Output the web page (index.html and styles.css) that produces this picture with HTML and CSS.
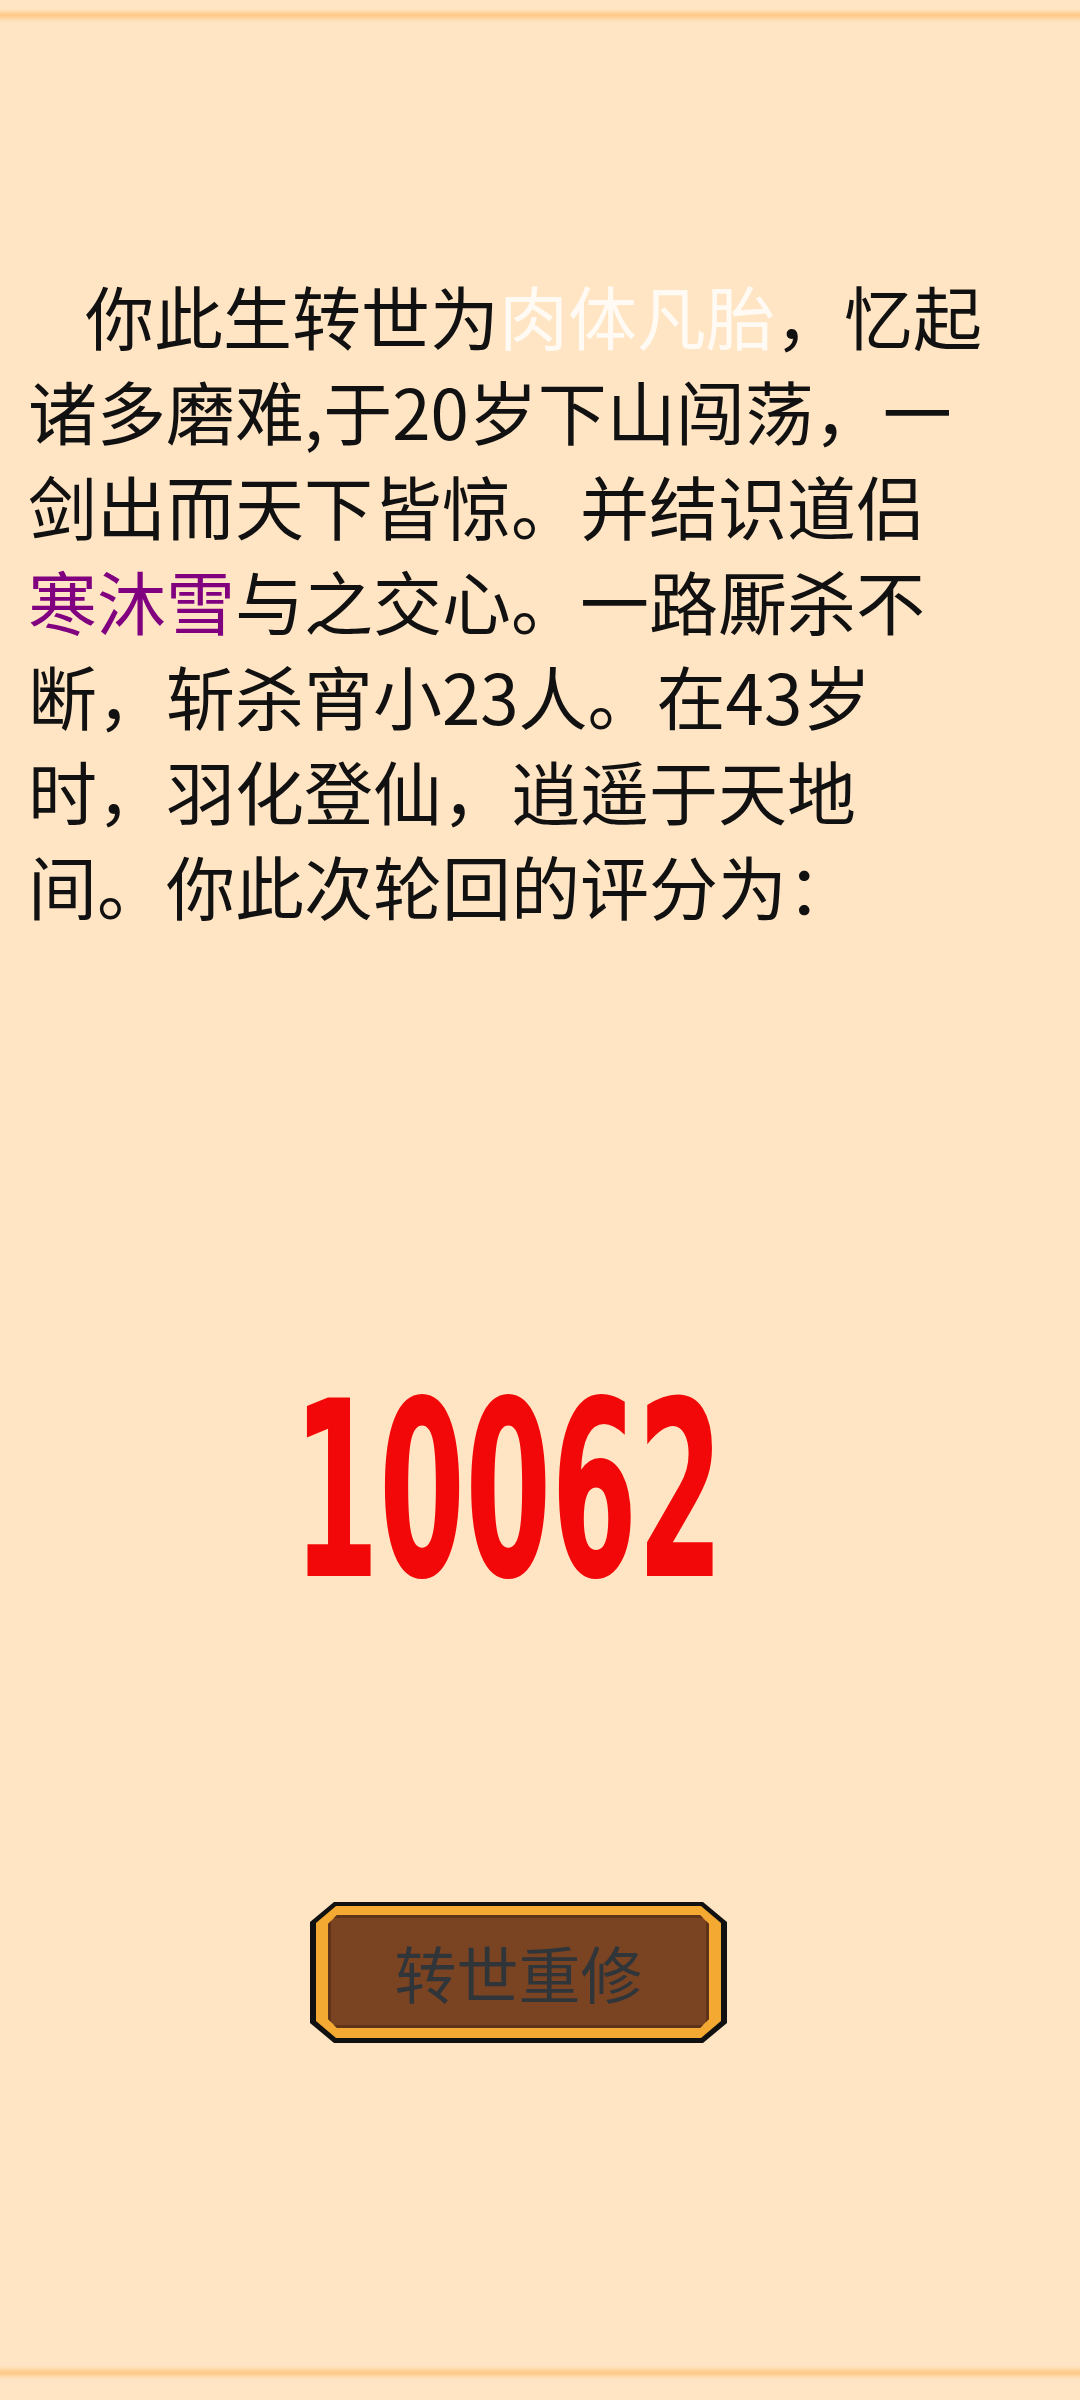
FILE: index.html
```html
<!DOCTYPE html>
<html>

<head>
    <meta charset="utf-8">
    <link rel="stylesheet" href="styles.css">
</head>

<body>
    <div class='page'>
        <div class='edge-top'></div>

        <div class='column'>
            <p class='story'>你此生转世为<span class='mark mark-body'>肉体凡胎</span>，忆起诸多磨难,于20岁下山闯荡，一剑出而天下皆惊。并结识道侣<span class='mark mark-mate'>寒沐雪</span>与之交心。一路厮杀不断，斩杀宵小23人。在43岁时，羽化登仙，逍遥于天地间。你此次轮回的评分为：</p>

            <div class='score'><span class='score-num'>10062</span></div>

            <button class='retry' onclick='location.reload()'>
                <span class='retry-rim'>
                    <span class='retry-face'>转世重修</span>
                </span>
            </button>
        </div>

        <div class='edge-bottom'></div>
    </div>
</body>

</html>
```

FILE: styles.css
```css
body {
    margin: 0;
    background: #ffe5c4;
    font-family: "Noto Sans CJK SC", "Noto Sans", sans-serif;
}

.page {
    min-height: 100vh;
    display: flex;
    flex-direction: column;
}

/* thin glowing rules at the top and bottom */
.edge-top {
    height: 30px;
    background: linear-gradient(to bottom,
            rgba(255, 200, 130, 0) 9px,
            #ffc985 15px,
            rgba(255, 200, 130, 0) 22px);
}

.edge-bottom {
    margin-top: auto;
    height: 54px;
    background: linear-gradient(to bottom,
            rgba(255, 200, 130, 0) 20px,
            #ffc985 27px,
            rgba(255, 200, 130, 0) 33px);
}

.column {
    width: 961px;
    margin-left: 28px;
    display: flex;
    flex-direction: column;
    align-items: center;
}

.story {
    align-self: stretch;
    margin: 238px 0 0;
    font-size: 69px;
    line-height: 95px;
    text-indent: 57px;
    color: #111;
}

.mark {
    display: inline-block;
    text-indent: 0;
}

.mark-body {
    color: #fffaf3;
}

.mark-mate {
    color: #800080;
}

.score {
    margin-top: 436px;
    height: 245px;
    font-family: "DejaVu Sans", sans-serif;
    font-weight: bold;
    font-size: 245px;
    line-height: 1;
    color: #f20808;
}

.score-num {
    display: inline-block;
    transform: scaleX(0.505);
}

/* octagon button: black outline, gold rim, brown face */
.retry {
    margin: 288px 0 0 20px;
    width: 417px;
    height: 141px;
    padding: 4px 6px 5px;
    border: none;
    background: #111;
    cursor: pointer;
    clip-path: polygon(24px 0, calc(100% - 24px) 0, 100% 20px, 100% calc(100% - 20px),
            calc(100% - 24px) 100%, 24px 100%, 0 calc(100% - 20px), 0 20px);
    display: flex;
}

.retry-rim {
    flex: 1;
    display: flex;
    padding: 9px 12px 10px;
    background: #f4aa32;
    clip-path: polygon(20px 0, calc(100% - 20px) 0, 100% 17px, 100% calc(100% - 17px),
            calc(100% - 20px) 100%, 20px 100%, 0 calc(100% - 17px), 0 17px);
}

.retry-face {
    flex: 1;
    display: flex;
    align-items: center;
    justify-content: center;
    background: #7a4423;
    box-shadow: inset 0 0 0 3px #5f3319;
    clip-path: polygon(9px 0, calc(100% - 9px) 0, 100% 9px, 100% calc(100% - 9px),
            calc(100% - 9px) 100%, 9px 100%, 0 calc(100% - 9px), 0 9px);
    font-family: "Noto Sans CJK SC", sans-serif;
    font-size: 62px;
    color: #30353a;
}
```
